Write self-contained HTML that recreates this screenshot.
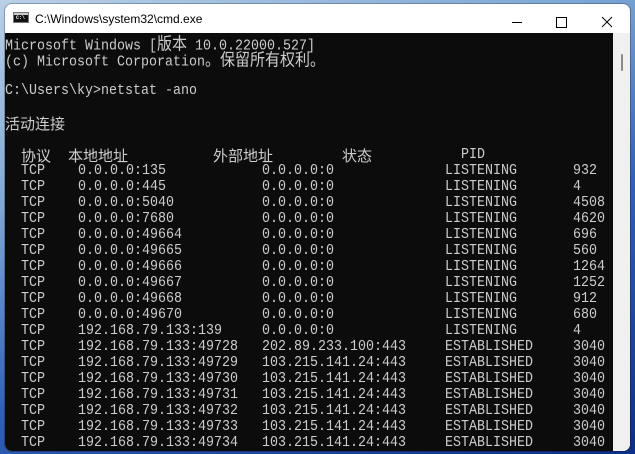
<!DOCTYPE html>
<html><head><meta charset="utf-8"><style>
html,body{margin:0;padding:0;width:635px;height:454px;overflow:hidden;}
body{background:linear-gradient(160deg,#b9d0e6 0%,#7fa8d6 30%,#2f62b8 60%,#0d2f86 100%);position:relative;}
.win{position:absolute;left:5px;top:4px;width:625px;height:447px;background:#fff;border-radius:7px;overflow:hidden;box-shadow:0 0 0 1px rgba(0,0,0,0.25);}
.title{position:absolute;left:30px;top:8px;font:12px "Liberation Sans",sans-serif;color:#000;}
.icon{position:absolute;left:8px;top:8px;width:16px;height:11px;background:#111;border:1px solid #777;box-sizing:border-box;}
.icon:before{content:"";position:absolute;left:0;right:0;top:0;height:2px;background:#ccc;}
.icon span{position:absolute;left:2px;top:2px;font:bold 5px "Liberation Mono",monospace;color:#fff;}
.con{position:absolute;left:0;top:29px;width:608px;height:420px;background:#0c0c0c;}
.sb{position:absolute;left:608px;top:29px;width:17px;height:420px;background:#f0f0f0;}
.thumb{position:absolute;left:8px;top:21px;width:2px;height:17px;background:#8a8a8a;border-radius:1px;}
.l{position:absolute;height:16px;line-height:16px;font-family:"Liberation Mono","Noto Sans CJK SC",monospace;font-size:13.33px;color:#cccccc;white-space:pre;transform:translateY(1px) scaleY(1.12);transform-origin:0 50%;}
.c{font-family:"Noto Sans CJK SC",sans-serif;font-size:15px;}
.l.c{transform:translateY(1px);}
</style></head><body>
<div class="win">
<div class="icon"><span>C:\</span></div>
<div class="title">C:\Windows\system32\cmd.exe</div>
<svg style="position:absolute;left:500px;top:8px" width="120" height="20">
<line x1="7" y1="10.5" x2="17" y2="10.5" stroke="#000" stroke-width="1"/>
<rect x="51.5" y="5.5" width="10" height="10" fill="none" stroke="#000" stroke-width="1"/>
<line x1="97" y1="5" x2="107" y2="15" stroke="#000" stroke-width="1"/>
<line x1="107" y1="5" x2="97" y2="15" stroke="#000" stroke-width="1"/>
</svg>
<div class="con"></div>
<div class="sb"><div class="thumb"></div></div>
</div>
<div class="l" style="left:5px;top:35px">Microsoft Windows [<span class="c">版本</span> 10.0.22000.527]</div>
<div class="l" style="left:5px;top:51px">(c) Microsoft Corporation<span class="c">。保留所有权利。</span></div>
<div class="l" style="left:5px;top:83px">C:\Users\ky&gt;netstat -ano</div>
<div class="l c" style="left:5px;top:115px">活动连接</div>
<div class="l c" style="left:21px;top:147px">协议</div>
<div class="l c" style="left:68px;top:147px">本地地址</div>
<div class="l c" style="left:213px;top:147px">外部地址</div>
<div class="l c" style="left:342px;top:147px">状态</div>
<div class="l" style="left:461px;top:147px">PID</div>
<div class="l" style="left:21px;top:163px">TCP</div><div class="l" style="left:78px;top:163px">0.0.0.0:135</div><div class="l" style="left:262px;top:163px">0.0.0.0:0</div><div class="l" style="left:445px;top:163px">LISTENING</div><div class="l" style="left:573px;top:163px">932</div>
<div class="l" style="left:21px;top:179px">TCP</div><div class="l" style="left:78px;top:179px">0.0.0.0:445</div><div class="l" style="left:262px;top:179px">0.0.0.0:0</div><div class="l" style="left:445px;top:179px">LISTENING</div><div class="l" style="left:573px;top:179px">4</div>
<div class="l" style="left:21px;top:195px">TCP</div><div class="l" style="left:78px;top:195px">0.0.0.0:5040</div><div class="l" style="left:262px;top:195px">0.0.0.0:0</div><div class="l" style="left:445px;top:195px">LISTENING</div><div class="l" style="left:573px;top:195px">4508</div>
<div class="l" style="left:21px;top:211px">TCP</div><div class="l" style="left:78px;top:211px">0.0.0.0:7680</div><div class="l" style="left:262px;top:211px">0.0.0.0:0</div><div class="l" style="left:445px;top:211px">LISTENING</div><div class="l" style="left:573px;top:211px">4620</div>
<div class="l" style="left:21px;top:227px">TCP</div><div class="l" style="left:78px;top:227px">0.0.0.0:49664</div><div class="l" style="left:262px;top:227px">0.0.0.0:0</div><div class="l" style="left:445px;top:227px">LISTENING</div><div class="l" style="left:573px;top:227px">696</div>
<div class="l" style="left:21px;top:243px">TCP</div><div class="l" style="left:78px;top:243px">0.0.0.0:49665</div><div class="l" style="left:262px;top:243px">0.0.0.0:0</div><div class="l" style="left:445px;top:243px">LISTENING</div><div class="l" style="left:573px;top:243px">560</div>
<div class="l" style="left:21px;top:259px">TCP</div><div class="l" style="left:78px;top:259px">0.0.0.0:49666</div><div class="l" style="left:262px;top:259px">0.0.0.0:0</div><div class="l" style="left:445px;top:259px">LISTENING</div><div class="l" style="left:573px;top:259px">1264</div>
<div class="l" style="left:21px;top:275px">TCP</div><div class="l" style="left:78px;top:275px">0.0.0.0:49667</div><div class="l" style="left:262px;top:275px">0.0.0.0:0</div><div class="l" style="left:445px;top:275px">LISTENING</div><div class="l" style="left:573px;top:275px">1252</div>
<div class="l" style="left:21px;top:291px">TCP</div><div class="l" style="left:78px;top:291px">0.0.0.0:49668</div><div class="l" style="left:262px;top:291px">0.0.0.0:0</div><div class="l" style="left:445px;top:291px">LISTENING</div><div class="l" style="left:573px;top:291px">912</div>
<div class="l" style="left:21px;top:307px">TCP</div><div class="l" style="left:78px;top:307px">0.0.0.0:49670</div><div class="l" style="left:262px;top:307px">0.0.0.0:0</div><div class="l" style="left:445px;top:307px">LISTENING</div><div class="l" style="left:573px;top:307px">680</div>
<div class="l" style="left:21px;top:323px">TCP</div><div class="l" style="left:78px;top:323px">192.168.79.133:139</div><div class="l" style="left:262px;top:323px">0.0.0.0:0</div><div class="l" style="left:445px;top:323px">LISTENING</div><div class="l" style="left:573px;top:323px">4</div>
<div class="l" style="left:21px;top:339px">TCP</div><div class="l" style="left:78px;top:339px">192.168.79.133:49728</div><div class="l" style="left:262px;top:339px">202.89.233.100:443</div><div class="l" style="left:445px;top:339px">ESTABLISHED</div><div class="l" style="left:573px;top:339px">3040</div>
<div class="l" style="left:21px;top:355px">TCP</div><div class="l" style="left:78px;top:355px">192.168.79.133:49729</div><div class="l" style="left:262px;top:355px">103.215.141.24:443</div><div class="l" style="left:445px;top:355px">ESTABLISHED</div><div class="l" style="left:573px;top:355px">3040</div>
<div class="l" style="left:21px;top:371px">TCP</div><div class="l" style="left:78px;top:371px">192.168.79.133:49730</div><div class="l" style="left:262px;top:371px">103.215.141.24:443</div><div class="l" style="left:445px;top:371px">ESTABLISHED</div><div class="l" style="left:573px;top:371px">3040</div>
<div class="l" style="left:21px;top:387px">TCP</div><div class="l" style="left:78px;top:387px">192.168.79.133:49731</div><div class="l" style="left:262px;top:387px">103.215.141.24:443</div><div class="l" style="left:445px;top:387px">ESTABLISHED</div><div class="l" style="left:573px;top:387px">3040</div>
<div class="l" style="left:21px;top:403px">TCP</div><div class="l" style="left:78px;top:403px">192.168.79.133:49732</div><div class="l" style="left:262px;top:403px">103.215.141.24:443</div><div class="l" style="left:445px;top:403px">ESTABLISHED</div><div class="l" style="left:573px;top:403px">3040</div>
<div class="l" style="left:21px;top:419px">TCP</div><div class="l" style="left:78px;top:419px">192.168.79.133:49733</div><div class="l" style="left:262px;top:419px">103.215.141.24:443</div><div class="l" style="left:445px;top:419px">ESTABLISHED</div><div class="l" style="left:573px;top:419px">3040</div>
<div class="l" style="left:21px;top:435px">TCP</div><div class="l" style="left:78px;top:435px">192.168.79.133:49734</div><div class="l" style="left:262px;top:435px">103.215.141.24:443</div><div class="l" style="left:445px;top:435px">ESTABLISHED</div><div class="l" style="left:573px;top:435px">3040</div>
</body></html>
